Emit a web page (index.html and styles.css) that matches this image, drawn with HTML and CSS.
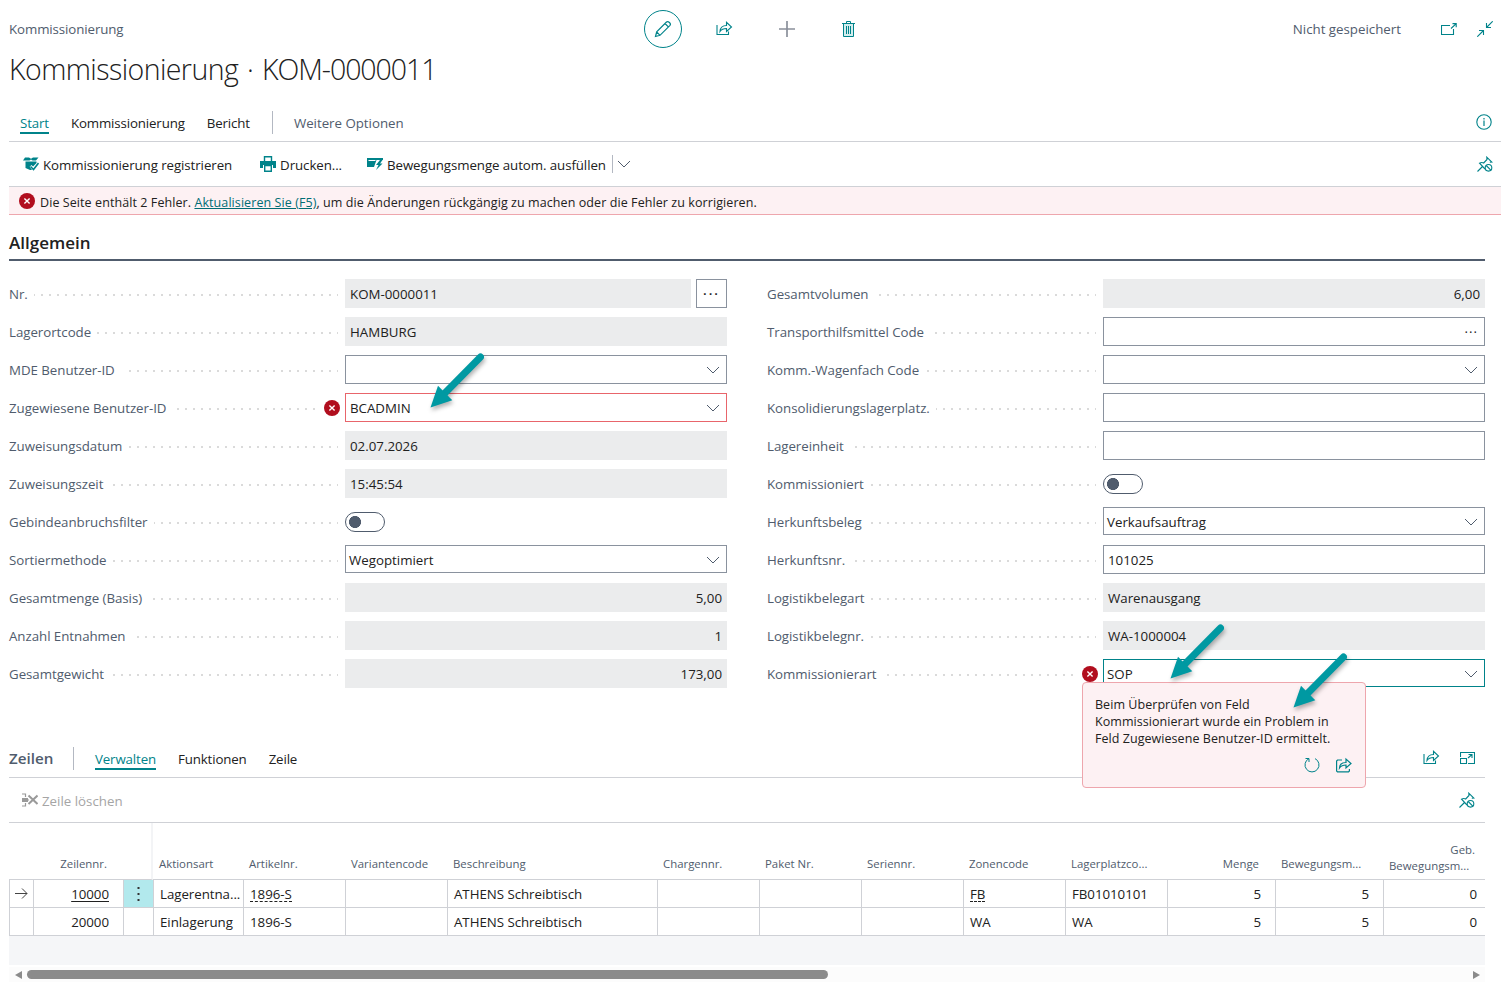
FILE: index.html
```html
<!DOCTYPE html>
<html lang="de">

<head>
    <meta charset="UTF-8" />
    <meta name="viewport" content="width=device-width, initial-scale=1.0" />
    <title>Kommissionierung</title>
    <link rel="stylesheet" href="styles.css">
</head>

<body>
    <svg class="sprite" width="0" height="0">
        <symbol id="chevron" viewBox="0 0 14 8"><path d="M1 1l6 6 6-6" fill="none" stroke="#505c6d" /></symbol>
        <symbol id="share" viewBox="0 0 16 16"><path d="M.5 4v9.500h11.500V10.500M3.500 10.500c.3-4 2.500-6 6.500-6V1.300l5 4.700-5 4.500V7.500C7 7.500 5 8.300 3.500 10.500z" fill="none" stroke="currentColor" stroke-width="1.100" /></symbol>
        <symbol id="error" viewBox="0 0 16 16"><circle cx="8" cy="8" r="8" fill="#b10e1e" /><path d="M5.400 5.400l5.200 5.200M10.600 5.400l-5.200 5.200" stroke="#fff" stroke-width="1.400" /></symbol>
        <symbol id="unpin" viewBox="0 0 16 16"><path d="M.5 15.500l5-5M8 13L2.500 7.200c1.500-.8 3-.8 4.200-.2L10 3.500 9.800 1.200l5 4.800-2 .2" fill="none" stroke="currentColor" stroke-width="1.100" /><circle cx="11.500" cy="11.800" r="3.300" fill="#fff" stroke="currentColor" stroke-width="1.100" /><path d="M9.200 9.500l4.600 4.600" stroke="currentColor" stroke-width="1.100" /></symbol>
        <symbol id="arrow" viewBox="0 0 62 62"><path d="M52.500 7L16 44" stroke="#0099a2" stroke-width="7" stroke-linecap="round" /><path d="M2.500 57.500L10 35.700l14.300 14.600z" fill="#0099a2" /></symbol>
    </svg>

    <header class="topbar">
        <div class="breadcrumb">Kommissionierung</div>
        <div class="page-actions">
            <button class="edit-button"><svg width="18" height="18" viewBox="0 0 18 18"><path d="M1.500 16.500l1.200-4.700L12.500 2c1.600-1.500 5 1.600 3.500 3.300L6 15.300zM2.700 11.800L6 15.300M11 3.500l3.600 3.600" fill="none" stroke="currentColor" stroke-width="1.200" /></svg></button>
            <svg class="share-icon" width="17" height="16"><use href="#share" /></svg>
            <svg class="plus-icon" width="16" height="16"><path d="M8 0v16M0 8h16" stroke="#8a909b" stroke-width="1.700" /></svg>
            <svg class="trash-icon" width="13" height="16" viewBox="0 0 13 16"><path d="M1.500 3v12.500h10V3" fill="#d4eeee" stroke="currentColor" /><path d="M0 2.500h13M4.500 2V.5h4V2M4.500 5v8M6.500 5v8M8.500 5v8" fill="none" stroke="currentColor" /></svg>
        </div>
        <div class="save-state">Nicht gespeichert</div>
        <svg class="popout-icon" width="16" height="12" viewBox="0 0 16 12"><path d="M9 2.500H.5v9h12V6M10 5.500L15 .8M11.500.6h3.700v3.700" fill="none" stroke="currentColor" stroke-width="1.100" /></svg>
        <svg class="collapse-icon" width="16" height="16" viewBox="0 0 16 16"><path d="M15.700.3L9.500 6.500M9.500 2v4.500H14M.3 15.700l6.200-6.200M2 9.500h4.500V14" fill="none" stroke="currentColor" stroke-width="1.100" /></svg>
    </header>

    <h1>Kommissionierung · <span class="doc-no">KOM-0000011</span></h1>

    <nav class="tabs">
        <a class="tab active">Start</a>
        <a class="tab">Kommissionierung</a>
        <a class="tab">Bericht</a>
        <span class="divider"></span>
        <a class="tab muted">Weitere Optionen</a>
        <svg class="info-icon" width="16" height="16" viewBox="0 0 16 16"><circle cx="8" cy="8" r="7.200" fill="none" stroke="currentColor" stroke-width="1.100" /><path d="M8 6.500V12M8 4v1.400" stroke="currentColor" stroke-width="1.200" /></svg>
    </nav>

    <div class="toolbar">
        <a class="action register"><svg width="16" height="16" viewBox="0 0 16 16"><path d="M2 1.500h4l2 1.300 2-1.300h5.500L13 4.500H9.500L8 3.500 6.500 4.500H0z" fill="currentColor" /><path d="M2.500 5.500h11v1.500L10 10.500 8.500 9 6.700 10.700 9 14H7l-4.500-2z" fill="currentColor" /><path d="M7.500 10.500l3 3 5-6.500" fill="none" stroke="currentColor" stroke-width="1.600" /></svg>Kommissionierung registrieren</a>
        <a class="action print"><svg width="16" height="16" viewBox="0 0 16 16"><path d="M4.500 5V.7h7V5" fill="none" stroke="currentColor" stroke-width="1.400" /><path d="M0 5h16v7h-3V9H3v3H0z" fill="currentColor" /><path d="M4.700 9.500h6.600v5.800H4.700z" fill="#fff" stroke="currentColor" stroke-width="1.400" /></svg>Drucken...</a>
        <a class="action autofill"><svg width="16" height="13" viewBox="0 0 16 13"><path d="M0 1h16v2H9.500L7 10H0z" fill="currentColor" /><path d="M1.500 3.500h7" stroke="#fff" /><path d="M13 3L9 8h2.500L9 13l6.500-6.500H13L15.500 3z" fill="currentColor" /></svg>Bewegungsmenge autom. ausfüllen</a>
        <span class="split"><svg width="14" height="8"><use href="#chevron" /></svg></span>
        <svg class="unpin-icon" width="16" height="16"><use href="#unpin" /></svg>
    </div>

    <div class="error-bar">
        <svg width="16" height="16"><use href="#error" /></svg>
        <span>Die Seite enthält 2 Fehler. <a href="#">Aktualisieren Sie (F5)</a>, um die Änderungen rückgängig zu machen oder die Fehler zu korrigieren.</span>
    </div>

    <section class="general">
        <h2>Allgemein</h2>
        <div class="columns">
            <div class="column">
                <div class="field"><div class="leader"><label>Nr.</label></div><div class="value readonly">KOM-0000011</div><button class="assist">···</button></div>
                <div class="field"><div class="leader"><label>Lagerortcode</label></div><div class="value readonly">HAMBURG</div></div>
                <div class="field"><div class="leader"><label class="wide">MDE Benutzer-ID</label></div><div class="value input"><svg class="chevron" width="14" height="8"><use href="#chevron" /></svg></div></div>
                <div class="field"><div class="leader has-error"><label class="wide">Zugewiesene Benutzer-ID</label></div><svg class="error-icon" width="16" height="16"><use href="#error" /></svg><div class="value input invalid">BCADMIN<svg class="chevron" width="14" height="8"><use href="#chevron" /></svg></div></div>
                <div class="field"><div class="leader"><label>Zuweisungsdatum</label></div><div class="value readonly">02.07.2026</div></div>
                <div class="field"><div class="leader"><label>Zuweisungszeit</label></div><div class="value readonly">15:45:54</div></div>
                <div class="field"><div class="leader"><label>Gebindeanbruchsfilter</label></div><span class="toggle"></span></div>
                <div class="field"><div class="leader"><label>Sortiermethode</label></div><div class="value input select">Wegoptimiert<svg class="chevron" width="14" height="8"><use href="#chevron" /></svg></div></div>
                <div class="field"><div class="leader"><label>Gesamtmenge (Basis)</label></div><div class="value readonly number">5,00</div></div>
                <div class="field"><div class="leader"><label>Anzahl Entnahmen</label></div><div class="value readonly number">1</div></div>
                <div class="field"><div class="leader"><label>Gesamtgewicht</label></div><div class="value readonly number">173,00</div></div>
            </div>
            <div class="column">
                <div class="field"><div class="leader"><label class="wide">Gesamtvolumen</label></div><div class="value readonly number">6,00</div></div>
                <div class="field"><div class="leader"><label class="wide">Transporthilfsmittel Code</label></div><div class="value input"><span class="dots">···</span></div></div>
                <div class="field"><div class="leader"><label>Komm.-Wagenfach Code</label></div><div class="value input"><svg class="chevron" width="14" height="8"><use href="#chevron" /></svg></div></div>
                <div class="field"><div class="leader"><label>Konsolidierungslagerplatz.</label></div><div class="value input"></div></div>
                <div class="field"><div class="leader"><label class="wide">Lagereinheit</label></div><div class="value input"></div></div>
                <div class="field"><div class="leader"><label>Kommissioniert</label></div><span class="toggle"></span></div>
                <div class="field"><div class="leader"><label>Herkunftsbeleg</label></div><div class="value input select">Verkaufsauftrag<svg class="chevron" width="14" height="8"><use href="#chevron" /></svg></div></div>
                <div class="field"><div class="leader"><label>Herkunftsnr.</label></div><div class="value input">101025</div></div>
                <div class="field"><div class="leader"><label>Logistikbelegart</label></div><div class="value readonly">Warenausgang</div></div>
                <div class="field"><div class="leader"><label>Logistikbelegnr.</label></div><div class="value readonly">WA-1000004</div></div>
                <div class="field"><div class="leader has-error"><label>Kommissionierart</label></div><svg class="error-icon" width="16" height="16"><use href="#error" /></svg><div class="value input select focused">SOP<svg class="chevron" width="14" height="8"><use href="#chevron" /></svg></div>
                    <div class="error-popup">
                        <p>Beim Überprüfen von Feld<br>Kommissionierart wurde ein Problem in<br>Feld Zugewiesene Benutzer-ID ermittelt.</p>
                        <div class="popup-actions">
                            <svg width="16" height="16" viewBox="0 0 16 16"><path d="M5 1.600A7 7 0 1 0 11 1.600M1.500 1.500H5V5" fill="none" stroke="currentColor" /></svg>
                            <svg width="16" height="16" viewBox="0 0 16 16"><path d="M6 3H1.500L.6 4v10l.9.900h11l.9-.9v-2M3.500 11c.3-4 2.500-5.500 6.500-5.500V2l5 4.500L10 11V8C7 8 5 8.800 3.500 11z" fill="none" stroke="currentColor" stroke-width="1.200" /></svg>
                        </div>
                    </div>
                </div>
            </div>
        </div>
    </section>

    <section class="lines">
        <div class="lines-header">
            <h3>Zeilen</h3>
            <span class="divider"></span>
            <a class="tab active">Verwalten</a>
            <a class="tab">Funktionen</a>
            <a class="tab">Zeile</a>
            <svg class="lines-share" width="17" height="16"><use href="#share" /></svg>
            <svg width="15" height="12" viewBox="0 0 15 12"><path d="M.5 5V.5h14v11H8M.5 6.500h6v5h-6zM8 6l4-3.500M8.500 2.500H12V6" fill="none" stroke="currentColor" stroke-width="1.100" /></svg>
        </div>
        <div class="lines-toolbar">
            <svg width="16" height="14" viewBox="0 0 16 14"><path d="M0 1h3.500v3M0 13h3.500v-3M0 7h7" fill="none" stroke="#9a9a9a" stroke-width="1.200" /><path d="M0 5h6v4H0z" fill="#9a9a9a" /><path d="M6.500 2.500l9 8.500M15.500 2.500l-9 8.500" stroke="#9a9a9a" stroke-width="2" /></svg>
            <span>Zeile löschen</span>
            <svg class="unpin-icon" width="16" height="16"><use href="#unpin" /></svg>
        </div>
        <table>
            <colgroup>
                <col class="w24"><col class="w90"><col class="w30"><col class="w90"><col class="w102"><col class="w102"><col class="w210"><col class="w102"><col class="w102"><col class="w102"><col class="w102"><col class="w102"><col class="w108"><col class="w108"><col class="w102">
            </colgroup>
            <thead>
                <tr>
                    <th></th>
                    <th class="num">Zeilennr.</th>
                    <th class="freeze"></th>
                    <th>Aktionsart</th>
                    <th>Artikelnr.</th>
                    <th>Variantencode</th>
                    <th>Beschreibung</th>
                    <th>Chargennr.</th>
                    <th>Paket Nr.</th>
                    <th>Seriennr.</th>
                    <th>Zonencode</th>
                    <th>Lagerplatzco...</th>
                    <th class="num">Menge</th>
                    <th>Bewegungsm...</th>
                    <th class="two-line"><span>Geb.</span>Bewegungsm...</th>
                </tr>
            </thead>
            <tbody>
                <tr>
                    <td class="marker"><svg width="13" height="11" viewBox="0 0 13 11"><path d="M0 5.500h12M7 .5l5 5-5 5" fill="none" stroke="#444" /></svg></td>
                    <td class="num"><u>10000</u></td>
                    <td class="menu"><svg width="3" height="15" viewBox="0 0 3 15"><path d="M.5 1h2M.5 7h2M.5 13h2" stroke="#333" stroke-width="2" /></svg></td>
                    <td>Lagerentna...</td>
                    <td><span class="dashed">1896-S</span></td>
                    <td></td>
                    <td>ATHENS Schreibtisch</td>
                    <td></td>
                    <td></td>
                    <td></td>
                    <td><span class="dashed">FB</span></td>
                    <td>FB01010101</td>
                    <td class="num">5</td>
                    <td class="num">5</td>
                    <td class="num">0</td>
                </tr>
                <tr>
                    <td></td>
                    <td class="num">20000</td>
                    <td></td>
                    <td>Einlagerung</td>
                    <td>1896-S</td>
                    <td></td>
                    <td>ATHENS Schreibtisch</td>
                    <td></td>
                    <td></td>
                    <td></td>
                    <td>WA</td>
                    <td>WA</td>
                    <td class="num">5</td>
                    <td class="num">5</td>
                    <td class="num">0</td>
                </tr>
            </tbody>
        </table>
        <div class="empty-rows"></div>
        <div class="scrollbar">
            <svg width="7" height="8"><path d="M7 0v8L0 4z" fill="#8b8b8b" /></svg>
            <span class="thumb"></span>
            <svg class="scroll-right" width="7" height="8"><path d="M0 0v8l7-4z" fill="#8b8b8b" /></svg>
        </div>
    </section>

    <svg class="pointer pointer-user" width="62" height="62"><use href="#arrow" /></svg>
    <svg class="pointer pointer-type" width="62" height="62"><use href="#arrow" /></svg>
    <svg class="pointer pointer-message" width="62" height="62"><use href="#arrow" /></svg>
</body>

</html>
```
FILE: styles.css
```css
* {
    box-sizing: border-box;
}

body {
    position: relative;
    margin: 0;
    padding-left: 9px;
    height: 993px;
    overflow: hidden;
    background: #fff;
    color: #212121;
    font-family: "Open Sans", "Noto Sans", sans-serif;
    font-size: 13.3px;
    line-height: 18px;
    white-space: nowrap;
}

svg {
    display: block;
    flex: none;
    color: #00838a;
}

button {
    padding: 0;
    background: #fff;
    font: inherit;
}

.sprite {
    position: absolute;
}

/* page header */
.topbar {
    display: flex;
    align-items: center;
    height: 58px;
}

.breadcrumb {
    width: 635px;
    color: #505c6d;
    letter-spacing: -0.1px;
}

.page-actions {
    display: flex;
    align-items: center;
}

.edit-button {
    display: flex;
    align-items: center;
    justify-content: center;
    width: 38px;
    height: 38px;
    border: 1px solid #00838a;
    border-radius: 50%;
}

.share-icon {
    margin-left: 34px;
}

.plus-icon {
    margin-left: 46px;
}

.trash-icon {
    margin-left: 47px;
}

.save-state {
    margin-left: auto;
    color: #505c6d;
}

.popout-icon {
    margin-left: 40px;
}

.collapse-icon {
    margin: 0 8px 0 20px;
}

h1 {
    margin: 0;
    height: 53px;
    font-size: 28.5px;
    font-weight: 300;
    letter-spacing: -0.57px;
    line-height: 22px;
    word-spacing: 2px;
}

.doc-no {
    letter-spacing: -1.05px;
}

/* tabs and actions */
.tabs {
    display: flex;
    align-items: flex-start;
    height: 31px;
    padding: 0 9px 0 11px;
    border-bottom: 1px solid #cfd1d6;
}

.tab {
    height: 23px;
    margin-right: 22px;
    padding-top: 3px;
    letter-spacing: -0.14px;
}

.tab.active {
    color: #00838a;
    border-bottom: 2px solid #00838a;
}

.tab.muted {
    color: #505c6d;
    letter-spacing: -0.02px;
}

.divider {
    width: 1px;
    height: 23px;
    margin-right: 21px;
    background: #b3b8c2;
}

.info-icon {
    margin: 3px 0 0 auto;
}

.toolbar {
    display: flex;
    align-items: center;
    height: 45px;
    padding: 0 8px 0 14px;
    border-bottom: 1px solid #cfd1d6;
    letter-spacing: -0.08px;
}

.action {
    display: flex;
    align-items: center;
    gap: 4px;
    padding-top: 2px;
}

.action svg {
    margin-top: -3px;
}

.print {
    margin-left: 28px;
}

.autofill {
    margin-left: 25px;
}

.split {
    display: flex;
    align-items: center;
    height: 18px;
    margin-left: 6px;
    padding-left: 4px;
    border-left: 1px solid #b3b8c2;
}

.unpin-icon {
    margin-left: auto;
}

.error-bar {
    display: flex;
    align-items: center;
    gap: 5px;
    height: 28px;
    padding: 1px 0 0 10px;
    background: #fdf1f3;
    border-bottom: 1px solid #eea6ad;
    font-size: 12.5px;
    letter-spacing: 0.08px;
}

.error-bar span {
    padding-top: 3px;
}

.error-bar a {
    color: #006d75;
}

/* general fields */
.general {
    width: 1476px;
}

h2 {
    margin: 0 0 18px;
    height: 46px;
    padding-top: 16px;
    border-bottom: 2px solid #505c6d;
    font-size: 17px;
    font-weight: 600;
    line-height: 24px;
}

.columns {
    display: flex;
    gap: 40px;
    height: 460px;
}

.column {
    width: 718px;
}

.field {
    position: relative;
    display: flex;
    height: 29px;
    margin-bottom: 9px;
}

.leader {
    width: 329px;
    margin-right: 7px;
    background: repeating-linear-gradient(to right, #dadada 0, #dadada 2px, transparent 2px, transparent 8px) 0 15px / 100% 2px no-repeat;
}

.leader.has-error {
    width: 308px;
}

.leader label {
    display: inline-block;
    height: 29px;
    padding-right: 6px;
    background: #fff;
    color: #505c6d;
    letter-spacing: -0.04px;
    line-height: 30px;
}

.leader label.wide {
    padding-right: 9px;
}

.error-icon {
    margin: 7px 5px 0 0;
}

.value {
    display: flex;
    align-items: center;
    flex: 1;
    height: 29px;
    padding: 1px 5px 0;
}

.readonly {
    background: #ebeced;
}

.input {
    padding: 1px 6px 0 4px;
    border: 1px solid #8a929e;
}

.select {
    height: 28px;
    padding-left: 3px;
}

.invalid {
    border-color: #e8656b;
}

.focused {
    border-color: #00838a;
}

.number {
    justify-content: flex-end;
}

.chevron {
    margin-left: auto;
}

.dots {
    margin-left: auto;
    letter-spacing: 1px;
}

.assist {
    width: 31px;
    margin-left: 5px;
    border: 1px solid #8a929e;
    color: #212121;
    font-weight: 600;
    letter-spacing: 2px;
}

.toggle {
    width: 40px;
    height: 20px;
    margin-top: 5px;
    border: 1px solid #505c6d;
    border-radius: 10px;
    background: radial-gradient(circle at 9px 9px, #505c6d 5.700px, transparent 6.300px);
}

.error-popup {
    position: absolute;
    left: 315px;
    top: 23px;
    width: 284px;
    height: 106px;
    padding: 13px 12px;
    border: 1px solid #eea6ad;
    border-radius: 4px;
    background: #fdf1f3;
    font-size: 12.5px;
    letter-spacing: 0.05px;
    line-height: 17px;
}

.error-popup p {
    margin: 0;
}

.popup-actions {
    display: flex;
    justify-content: flex-end;
    gap: 16px;
    margin: 10px 1px 0 0;
}

/* lines */
.lines {
    width: 1476px;
}

.lines-header {
    display: flex;
    height: 39px;
    padding: 8px 10px 0 0;
    border-bottom: 1px solid #cfd1d6;
}

h3 {
    width: 64px;
    margin: 0;
    color: #505c6d;
    font-size: 15.2px;
    font-weight: 600;
    line-height: 23px;
}

.lines-header svg {
    margin-top: 5px;
}

.lines-header .lines-share {
    margin: 3px 20px 0 auto;
}

.lines-toolbar {
    display: flex;
    align-items: center;
    gap: 4px;
    height: 45px;
    padding: 0 10px 0 13px;
    border-bottom: 1px solid #cfd1d6;
    color: #a5a5a5;
}

.lines-toolbar span {
    padding-top: 2px;
}

table {
    width: 1476px;
    table-layout: fixed;
    border-spacing: 0;
}

.w24 {
    width: 24px;
}

.w30 {
    width: 30px;
}

.w90 {
    width: 90px;
}

.w102 {
    width: 102px;
}

.w108 {
    width: 108px;
}

.w210 {
    width: 210px;
}

th {
    height: 57px;
    padding: 0 0 7px 6px;
    border-bottom: 1px solid #cfd1d6;
    color: #505c6d;
    font-size: 11.4px;
    font-weight: 400;
    line-height: 16px;
    text-align: left;
    vertical-align: bottom;
}

th.num {
    padding-right: 16px;
}

th.freeze {
    border-right: 2px solid #f3f4f6;
}

th.two-line {
    padding-bottom: 5px;
}

.two-line span {
    display: block;
    padding-right: 10px;
    text-align: right;
}

td {
    height: 28px;
    padding: 0 0 0 6px;
    border-left: 1px solid #cfd1d6;
    border-bottom: 1px solid #cfd1d6;
    letter-spacing: -0.04px;
}

td.marker {
    padding-left: 5px;
}

.num {
    padding-right: 14px;
    text-align: right;
}

/* last column is partly scrolled out */
td.num:last-child {
    padding-right: 8px;
}

td.menu {
    padding: 2px 0 0 13px;
    background: #b2e9ed;
}

.dashed {
    border-bottom: 1px dashed #212121;
    line-height: 14px;
    display: inline-block;
}

u {
    text-underline-offset: 2px;
}

.empty-rows {
    height: 29px;
    background: #f5f6f8;
}

.scrollbar {
    display: flex;
    align-items: center;
    height: 15px;
    margin-top: 2px;
    padding: 0 5px 0 6px;
    background: #fcfcfc;
}

.thumb {
    width: 801px;
    height: 9px;
    margin-left: 5px;
    border-radius: 5px;
    background: #8b8b8b;
}

.scroll-right {
    margin-left: auto;
}

/* pointers over the form */
.pointer {
    position: absolute;
    filter: drop-shadow(1px 3px 2px rgba(0, 0, 0, 0.3));
}

.pointer-user {
    left: 428px;
    top: 350px;
}

.pointer-type {
    left: 1168px;
    top: 621px;
}

.pointer-message {
    left: 1291px;
    top: 650px;
}
```
